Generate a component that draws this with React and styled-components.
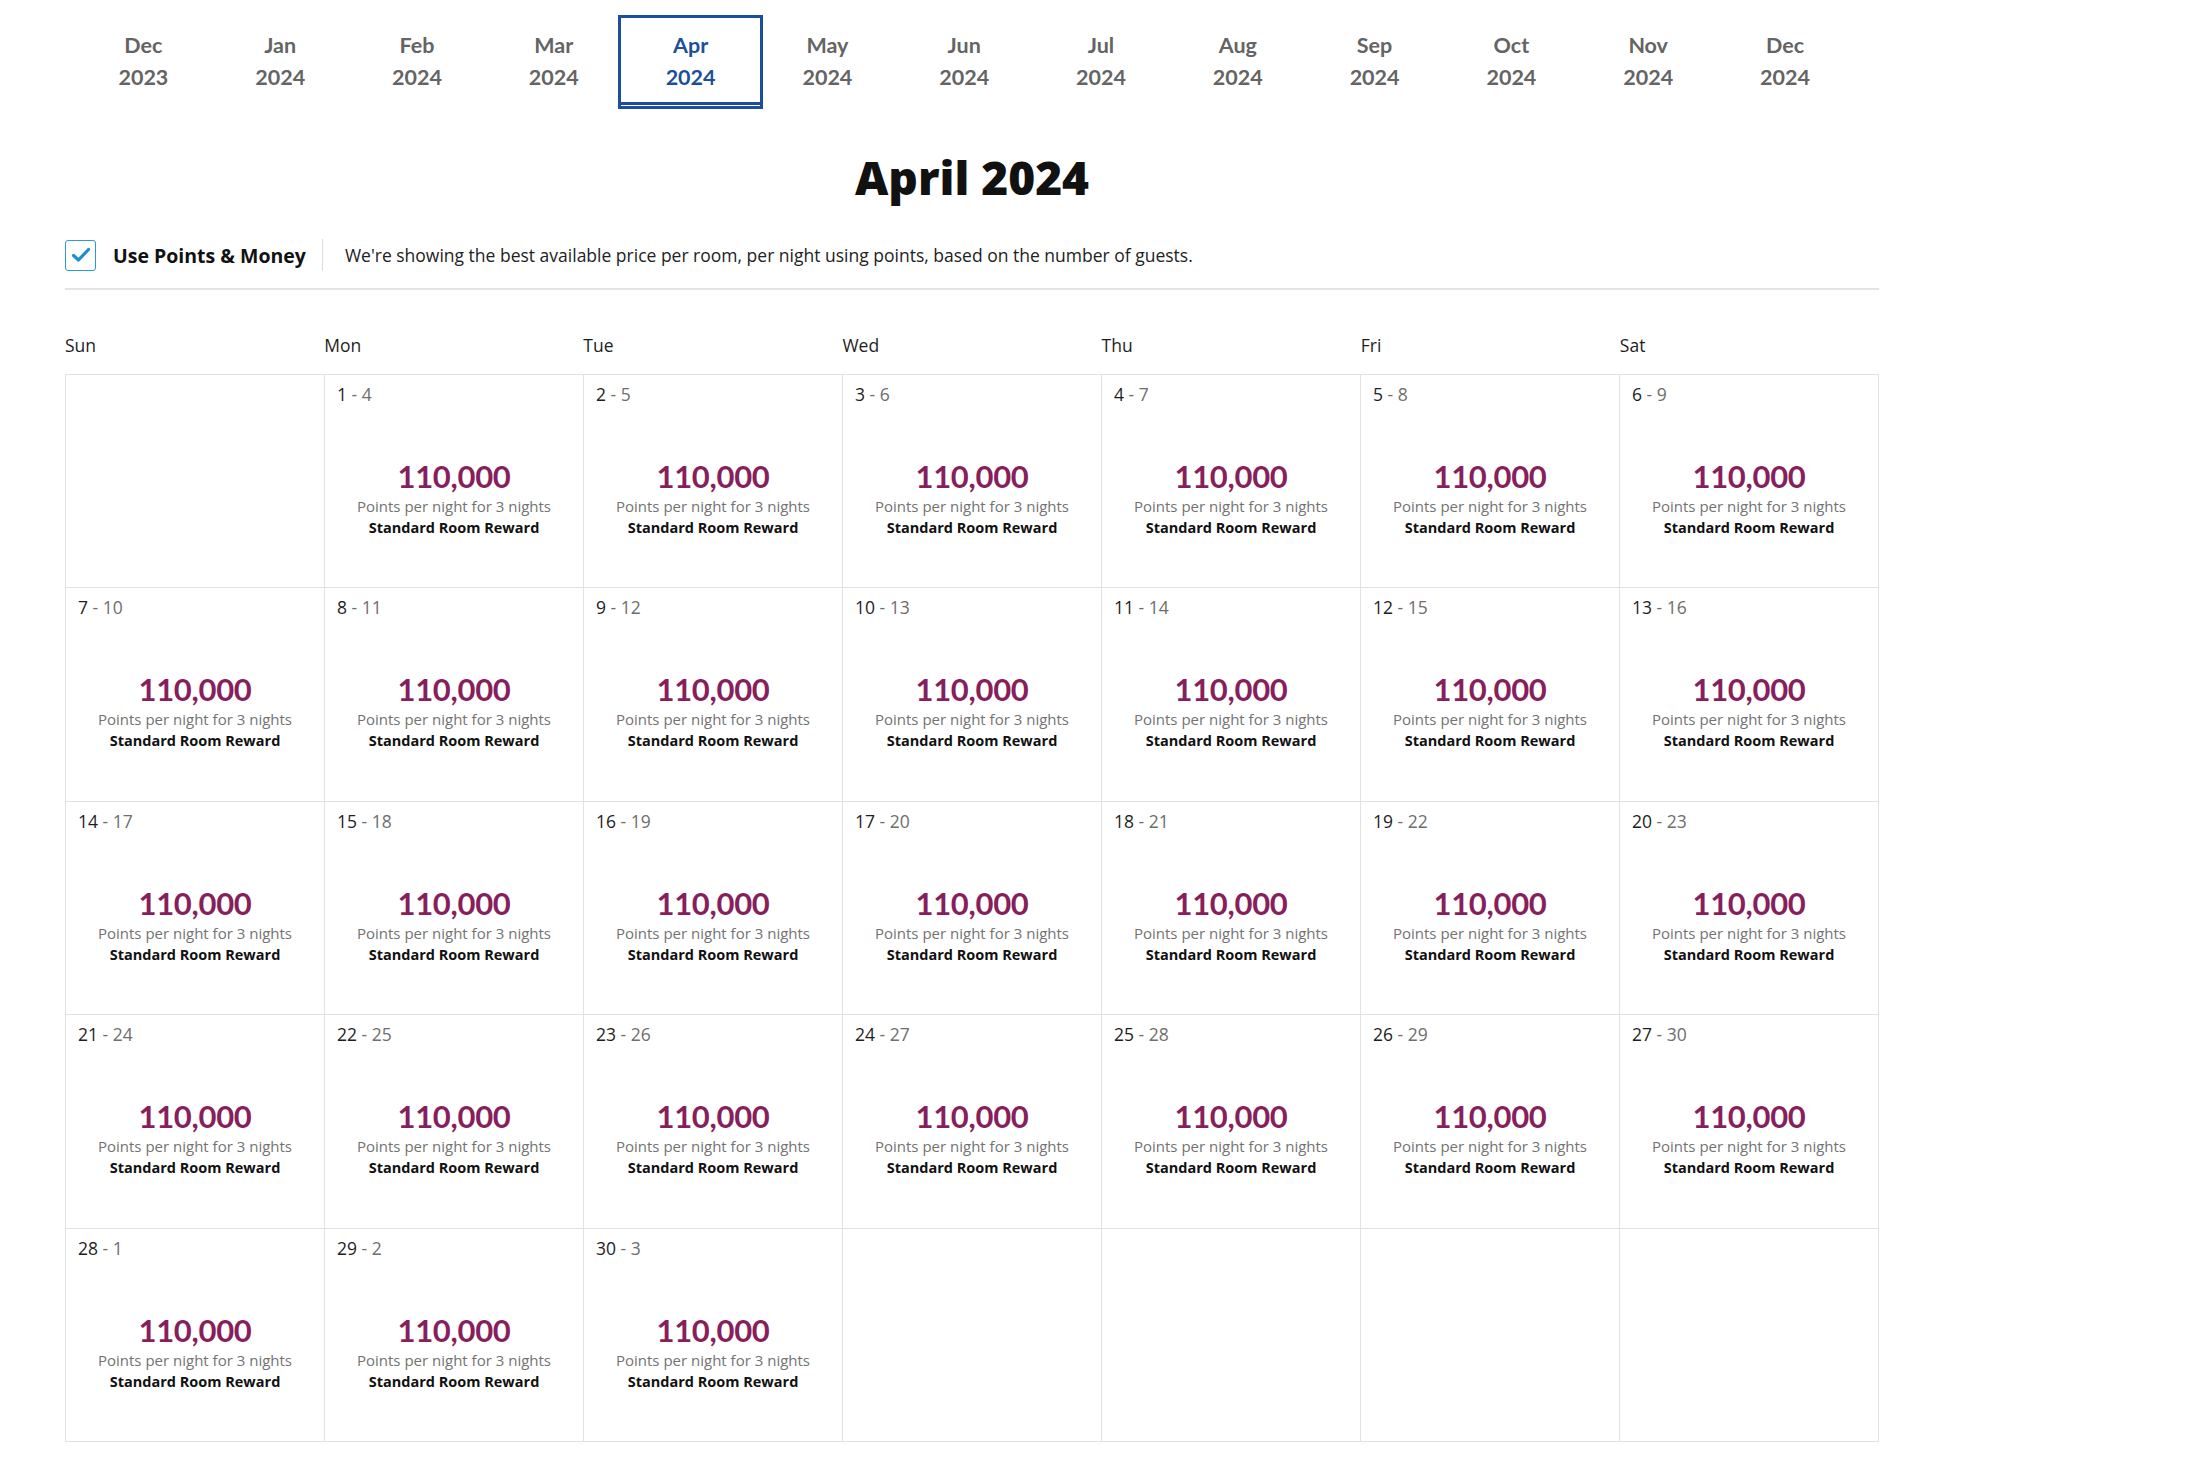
import React from "react";
import styled, {createGlobalStyle} from "styled-components";

const GlobalStyle = createGlobalStyle`
  body {
    margin: 0;
    background: #fff;
    font-family: "Open Sans", "Liberation Sans", sans-serif;
    color: #222;
  }
`;

const Page = styled.div`
  width: 1814px;
  padding: 15px 0 20px 65px;
`;

const Months = styled.ul`
  display: flex;
  margin: 0;
  padding: 0 0 0 10px;
  list-style: none;
`;

const Month = styled.li`
  box-sizing: border-box;
  width: ${p => (p.$active ? "145px" : "136.8px")};
  margin: ${p => (p.$active ? "0 -4.1px" : "0")};
  height: 94px;
  display: flex;
  flex-direction: column;
  align-items: center;
  justify-content: center;
  font-family: Lato, "Open Sans", sans-serif;
  font-size: 21.5px;
  font-weight: 700;
  line-height: 31.6px;
  color: ${p => (p.$active ? "#1b4f9c" : "#646464")};
  border: ${p => (p.$active ? "3px solid #1b4f9c" : "none")};
  box-shadow: ${p =>
    p.$active ? "inset 0 -1px 0 #fff, inset 0 -4px 0 #1b4f9c" : "none"};
  cursor: pointer;
`;

const Title = styled.h1`
  margin: 40px 0 0;
  font-size: 46px;
  font-weight: 800;
  line-height: 56px;
  text-align: center;
  color: #111;
`;

const Toolbar = styled.div`
  display: flex;
  align-items: center;
  margin-top: 34px;
  padding-bottom: 17px;
  border-bottom: 2px solid #e4e4e4;
`;

const Checkbox = styled.span`
  box-sizing: border-box;
  width: 31px;
  height: 31px;
  border: 1.5px solid #2b9bd8;
  border-radius: 3px;
  display: flex;
  align-items: center;
  justify-content: center;
`;

const ToggleLabel = styled.span`
  margin-left: 17px;
  font-size: 19.5px;
  font-weight: 700;
  color: #111;
`;

const Divider = styled.span`
  width: 1px;
  height: 32px;
  margin: 0 22px 0 16px;
  background: #dedede;
`;

const Note = styled.span`
  font-size: 17.5px;
  color: #222;
`;

const Weekdays = styled.div`
  display: grid;
  grid-template-columns: repeat(7, 1fr);
  height: 84px;
  box-sizing: border-box;
  padding-top: 45px;
  font-size: 17.5px;
  line-height: 20px;
  color: #1e1e1e;
`;

const Calendar = styled.div`
  display: grid;
  grid-template-columns: repeat(7, 1fr);
  grid-auto-rows: 213.4px;
  border-right: 1px solid #e2e2e2;
  border-bottom: 1px solid #e2e2e2;
`;

const Day = styled.div`
  box-sizing: border-box;
  padding: 9px 12px 0;
  border-left: 1px solid #e2e2e2;
  border-top: 1px solid #e2e2e2;
  text-align: center;
`;

const Dates = styled.div`
  text-align: left;
  font-size: 17.5px;
  line-height: 20px;
  color: #1e1e1e;
`;

const CheckOut = styled.span`
  color: #6e6e6e;
`;

const Price = styled.div`
  margin-top: 54px;
  font-family: Lato, "Open Sans", sans-serif;
  font-size: 31px;
  font-weight: 700;
  line-height: 36px;
  letter-spacing: -0.3px;
  color: #871f5d;
`;

const PriceNote = styled.div`
  margin-top: 2px;
  font-size: 15px;
  line-height: 20px;
  color: #737373;
`;

const RoomType = styled.div`
  margin-top: 2px;
  font-size: 14.5px;
  font-weight: 700;
  line-height: 20px;
  color: #111;
`;

const months = [
  ["Dec", "2023"],
  ["Jan", "2024"],
  ["Feb", "2024"],
  ["Mar", "2024"],
  ["Apr", "2024"],
  ["May", "2024"],
  ["Jun", "2024"],
  ["Jul", "2024"],
  ["Aug", "2024"],
  ["Sep", "2024"],
  ["Oct", "2024"],
  ["Nov", "2024"],
  ["Dec", "2024"],
];

const weekdays = ["Sun", "Mon", "Tue", "Wed", "Thu", "Fri", "Sat"];

// april 2024 starts on a monday, 30 days
const cells = [];
for (let i = 0; i < 35; i++) {
  cells.push(i >= 1 && i <= 30 ? i : null);
}

export default function App() {
  return (
    <Page>
      <GlobalStyle />
      <Months>
        {months.map(([name, year], i) => (
          <Month key={name + year} $active={i === 4}>
            <span>{name}</span>
            <span>{year}</span>
          </Month>
        ))}
      </Months>

      <Title>April 2024</Title>

      <Toolbar>
        <Checkbox>
          <svg width="22" height="22" viewBox="0 0 22 22">
            <polyline
              points="3.5,11.5 8.5,16 18.5,5.5"
              fill="none"
              stroke="#1b8fd2"
              strokeWidth="3.2"
              strokeLinecap="round"
              strokeLinejoin="round"
            />
          </svg>
        </Checkbox>
        <ToggleLabel>Use Points &amp; Money</ToggleLabel>
        <Divider />
        <Note>
          We're showing the best available price per room, per night using
          points, based on the number of guests.
        </Note>
      </Toolbar>

      <Weekdays>
        {weekdays.map(d => (
          <span key={d}>{d}</span>
        ))}
      </Weekdays>

      <Calendar>
        {cells.map((day, i) => (
          <Day key={i}>
            {day && (
              <>
                <Dates>
                  {day} <CheckOut>- {day + 3 > 30 ? day + 3 - 30 : day + 3}</CheckOut>
                </Dates>
                <Price>110,000</Price>
                <PriceNote>Points per night for 3 nights</PriceNote>
                <RoomType>Standard Room Reward</RoomType>
              </>
            )}
          </Day>
        ))}
      </Calendar>
    </Page>
  );
}
